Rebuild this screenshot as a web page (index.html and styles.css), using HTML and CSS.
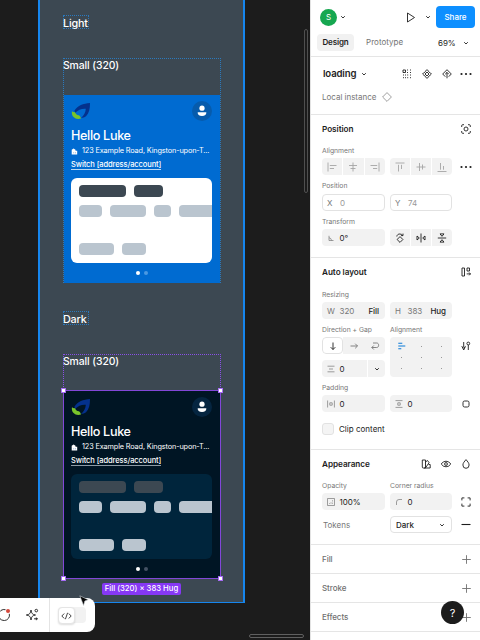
FILE: index.html
```
<!DOCTYPE html>
<html lang="en">
<head>
<meta charset="utf-8">
<title>Design editor</title>
<link rel="stylesheet" href="styles.css">
</head>
<body>
<svg class="defs" aria-hidden="true">
  <symbol id="chev" viewBox="0 0 6 6"><path d="M1.200 2.200 3 4l1.800-1.800"/></symbol>
  <symbol id="logo" viewBox="0 0 20 18"><path d="M3.500 8.500C7 3.200 12 1.500 19 1c0 6-1 10.500-4 13.200-1.500 1.200-3 1.600-5 1.800 3-2.500 4.500-5.500 4.800-9.200C10.500 6.500 7 8 4 11z" fill="#04318c"/><path d="M1 9.300C0 14 4 18.200 10 16.500 9.600 15 9 14 7.800 13.300 5.800 13.200 4.400 12 4 10c-1 .4-2 .1-3-.7z" fill="#79c52b"/></symbol>
  <symbol id="user" viewBox="0 0 10 12"><circle cx="5" cy="3.200" r="2.600" fill="#fff"/><path d="M.7 7.200h8.600c.3 2.300-1.500 3.800-4.300 3.800S.4 9.500.7 7.200z" fill="#fff"/></symbol>
  <symbol id="home" viewBox="0 0 7 7"><path d="M.7 1.800 2.600.4l1.900 1.400v1h1.700v3.700H.7z" fill="#fff"/><path d="M2.700 4.300v1M4.500 4.300v1" stroke="#4a80bb" stroke-width=".6"/></symbol>
  <symbol id="plus" viewBox="0 0 9 9"><path d="M4.500.200v8.600M.2 4.500h8.600"/></symbol>
</svg>
<div class="app">
  <main class="canvas">
    <div class="frame">
      <div class="mode-name light-name">Light</div>
      <section class="variant">
        <h3>Small (320)</h3>
        <article class="card">
          <div class="brand"><svg class="logo"><use href="#logo"/></svg><span class="account"><svg><use href="#user"/></svg></span></div>
          <h2>Hello Luke</h2>
          <p class="address"><svg><use href="#home"/></svg><span>123 Example Road, Kingston-upon-T...</span></p>
          <div class="switch"><span>Switch [address/account]</span></div>
          <div class="skeleton">
            <div class="bars strong"><i class="w47"></i><i class="w29"></i></div>
            <div class="bars"><i class="w23"></i><i class="w35"></i><i class="w18"></i><i class="w47"></i></div>
            <div class="bars last"><i class="w35"></i><i class="w23"></i></div>
          </div>
          <div class="dots"><b></b><b></b></div>
        </article>
      </section>
      <div class="mode-name dark-name">Dark</div>
      <section class="variant selected">
        <h3>Small (320)</h3>
        <article class="card dark">
          <div class="brand"><svg class="logo"><use href="#logo"/></svg><span class="account"><svg><use href="#user"/></svg></span></div>
          <h2>Hello Luke</h2>
          <p class="address"><svg><use href="#home"/></svg><span>123 Example Road, Kingston-upon-T...</span></p>
          <div class="switch"><span>Switch [address/account]</span></div>
          <div class="skeleton">
            <div class="bars strong"><i class="w47"></i><i class="w29"></i></div>
            <div class="bars"><i class="w23"></i><i class="w35"></i><i class="w18"></i><i class="w47"></i></div>
            <div class="bars last"><i class="w35"></i><i class="w23"></i></div>
          </div>
          <div class="dots"><b></b><b></b></div>
          <span class="handle tl"></span><span class="handle tr"></span><span class="handle bl"></span><span class="handle br"></span>
        </article>
      </section>
      <div class="size-badge">Fill (320) × 383 Hug</div>
    </div>
    <div class="scroll-v"></div>
    <div class="scroll-h"></div>
    <div class="toolbar">
      <svg class="tool-comment" viewBox="0 0 14 14"><path d="M7.500 1.700A5.500 5.500 0 1 0 6 12.500h.5A5.300 5.300 0 0 0 11.300 5.800"/><circle cx="10" cy="3" r="2" class="alert"/></svg>
      <svg class="tool-spark" viewBox="0 0 14 14"><path d="M6 2c.4 3.400 1.500 4.600 4.500 5-3 .5-4.100 1.600-4.500 5-.4-3.400-1.500-4.500-4.700-5C4.500 6.600 5.600 5.400 6 2zM9 10.800h4M11.300 9.500v2.700"/><circle cx="11.300" cy="2.600" r="1.300"/></svg>
      <div class="toggle"><span><svg viewBox="0 0 12 10"><path d="M3.500 2.300.9 5l2.600 2.700M8.500 2.300 11.100 5 8.500 7.700M7.200 1.500 4.800 8.500"/></svg></span></div>
    </div>
    <svg class="cursor" viewBox="0 0 10 12"><path d="M.8.8 9.200 4.700 5.800 6.100 4.600 10.500z"/></svg>
  </main>

  <aside class="panel">
    <header>
      <div class="topbar">
        <span class="avatar">S</span><svg class="chev"><use href="#chev"/></svg>
        <svg class="play" viewBox="0 0 10 11"><path d="M1.500 1v9l7-4.500z"/></svg><svg class="chev"><use href="#chev"/></svg>
        <button class="share">Share</button>
      </div>
      <nav class="tabs"><span class="tab active">Design</span><span class="tab proto">Prototype</span><span class="zoom">69%</span><svg class="chev"><use href="#chev"/></svg></nav>
    </header>

    <section class="component">
      <div class="title">
        <strong>loading</strong><svg class="chev"><use href="#chev"/></svg>
        <svg class="icon first" viewBox="0 0 10 10"><path d="M1 1h2.500v2.500H1zM5 1h1M8 1h1M5 3.500h1M8 3.500h1M1 6h1M3 6h1M5.200 6h1M8 6h1M1 8.700h1M3 8.700h1M5.200 8.700h1M8 8.700h1"/></svg>
        <svg class="icon" viewBox="0 0 10 10"><path d="M5 .6 6.700 2.300 5 4 3.300 2.300zM5 6 6.700 7.700 5 9.400 3.300 7.700zM2.300 3.300 4 5 2.300 6.700.6 5zM7.700 3.300 9.400 5 7.700 6.700 6 5z"/></svg>
        <svg class="icon" viewBox="0 0 10 10"><path d="M3.300 7.700.7 5 5 .7 9.300 5 6.700 7.700M5 9.300V3.500M3.200 5.200 5 3.400l1.800 1.800"/></svg>
        <svg class="icon more" viewBox="0 0 12 4"><circle cx="1.500" cy="2" r="1.100"/><circle cx="6" cy="2" r="1.100"/><circle cx="10.500" cy="2" r="1.100"/></svg>
      </div>
      <div class="local"><span>Local instance</span><svg viewBox="0 0 10 10"><path d="M5 .6 9.400 5 5 9.400.6 5z"/></svg></div>
    </section>

    <section class="position">
      <div class="head"><strong>Position</strong><svg class="icon" viewBox="0 0 10 10"><path d="M.7 3V1.700q0-1 1-1H3M7 .7h1.300q1 0 1 1V3M9.300 7v1.300q0 1-1 1H7M3 9.300H1.700q-1 0-1-1V7"/><circle cx="5" cy="5" r="2"/></svg></div>
      <div class="label l15">Alignment</div>
      <div class="row">
        <div class="seg muted">
          <span><svg viewBox="0 0 10 10"><path d="M1 .5v9M2.800 3.500H9.500M2.800 6.500H7"/></svg></span>
          <span><svg viewBox="0 0 10 10"><path d="M5 .5v9M1 3.500h8M2.500 6.500h5"/></svg></span>
          <span><svg viewBox="0 0 10 10"><path d="M9 .5v9M.5 3.500h6.700M3 6.500h4.200"/></svg></span>
        </div>
        <div class="seg muted">
          <span><svg viewBox="0 0 10 10"><path d="M.5 1h9M3.500 2.800v6.700M6.500 2.800V7"/></svg></span>
          <span><svg viewBox="0 0 10 10"><path d="M.5 5h9M3.500 1v8M6.500 2.500v5"/></svg></span>
          <span><svg viewBox="0 0 10 10"><path d="M.5 9.500h9M3.500 1v6.700M6.500 4v3.700"/></svg></span>
        </div>
        <svg class="icon more" viewBox="0 0 12 4"><circle cx="1.500" cy="2" r="1.100"/><circle cx="6" cy="2" r="1.100"/><circle cx="10.500" cy="2" r="1.100"/></svg>
      </div>
      <div class="label l19">Position</div>
      <div class="row">
        <div class="field outline"><span class="key">X</span><span>0</span></div>
        <div class="field outline"><span class="key">Y</span><span>74</span></div>
      </div>
      <div class="label l18">Transform</div>
      <div class="row">
        <div class="field"><svg class="key" viewBox="0 0 8 8"><path d="M2 1.800v4.700h4.500M2 3.700q2.300.4 2.600 2.800"/></svg><span>0°</span></div>
        <div class="seg">
          <span><svg viewBox="0 0 10 10"><path d="M5 3.600 7.900 6.500 5 9.400 2.100 6.500zM1.800 3.500C2 1.800 3.300 1 4.800 1c1.300 0 2.200.5 2.900 1.400M8 .6v2H6"/></svg></span>
          <span><svg viewBox="0 0 10 10"><path d="M5 .5v9M1 3v4l2.300-2zM9 3v4L6.700 5z"/></svg></span>
          <span><svg viewBox="0 0 10 10"><path d="M.8 5h8.400M3 .9h4L5 3.300zM3 9.100h4L5 6.700z"/></svg></span>
        </div>
      </div>
    </section>

    <section class="autolayout">
      <div class="head"><strong>Auto layout</strong><svg class="icon" viewBox="0 0 10 10"><path d="M1 1h2.500v8H1zM6 1h2.500v3H6zM5.700 6.900h3.800M8.200 5.500l1.300 1.400-1.300 1.400"/></svg></div>
      <div class="label l16">Resizing</div>
      <div class="row">
        <div class="field size"><span class="key">W</span><span>320</span><em>Fill</em></div>
        <div class="field size"><span class="key">H</span><span>383</span><em>Hug</em></div>
      </div>
      <div class="row label l18"><span>Direction + Gap</span><span>Alignment</span></div>
      <div class="row tall">
        <div class="stack">
          <div class="seg direction">
            <span class="on"><svg viewBox="0 0 10 10"><path d="M5 1.500v7M2.700 6.200 5 8.500l2.300-2.300"/></svg></span>
            <span><svg viewBox="0 0 10 10"><path d="M1.500 5h7M6.200 2.700 8.500 5 6.200 7.300"/></svg></span>
            <span><svg viewBox="0 0 10 10"><path d="M3 2h3.700C9.300 2 9.300 6.500 6.700 6.500H1.800M3.800 4.500l-2 2 2 2"/></svg></span>
          </div>
          <div class="field gap"><svg class="key" viewBox="0 0 8 8"><path d="M.5 1.200h7M2 4h4M.5 6.800h7"/></svg><span>0</span><i><svg class="chev"><use href="#chev"/></svg></i></div>
        </div>
        <div class="matrix"><svg viewBox="0 0 8 8"><path d="M.3 1.200h4M.3 4h7M.3 6.800h3"/></svg><b></b><b></b><b></b><b></b><b></b><b></b><b></b><b></b></div>
        <svg class="icon adjust" viewBox="0 0 10 10"><path d="M2.700 1v5M7.300 9V4M1 5.500l1.700 1.700 1.700-1.700L2.700 9z"/><circle cx="7.300" cy="2.500" r="1.400"/></svg>
      </div>
      <div class="label l18">Padding</div>
      <div class="row">
        <div class="field"><svg class="key" viewBox="0 0 8 8"><path d="M.6.500v7M7.400.500v7M2.800 2.800h2.400v2.400H2.800z"/></svg><span>0</span></div>
        <div class="field"><svg class="key" viewBox="0 0 8 8"><path d="M.500.600h7M.500 7.400h7M2.800 2.800h2.400v2.400H2.800z"/></svg><span>0</span></div>
        <svg class="icon" viewBox="0 0 10 10"><path d="M3.600 2h2.800M3.600 8h2.800M2 3.600v2.800M8 3.600v2.800M2 3.600Q2 2 3.600 2M6.400 2Q8 2 8 3.600M8 6.400Q8 8 6.400 8M3.600 8Q2 8 2 6.400"/></svg>
      </div>
      <div class="clip"><i></i><span>Clip content</span></div>
    </section>

    <section class="appearance">
      <div class="head"><strong>Appearance</strong>
        <svg class="icon" viewBox="0 0 10 10"><path d="M1.300 1h3.200v8H2.300q-1 0-1-1zM4.500 3l2-1.500 1.600 2.200L4.500 8.800M7.600 5.500h1.600V9H3"/></svg>
        <svg class="icon" viewBox="0 0 10 10"><path d="M.2 5Q2 2.200 5 2.200T9.800 5Q8 7.800 5 7.800T.2 5z"/><circle cx="5" cy="5" r="1.400"/></svg>
        <svg class="icon" viewBox="0 0 10 10"><path d="M5 .6C6.500 2.500 8.100 4 8.100 6a3.100 3.300 0 0 1-6.200 0C1.900 4 3.500 2.500 5 .6z"/></svg></div>
      <div class="row label l15"><span>Opacity</span><span>Corner radius</span></div>
      <div class="row">
        <div class="field"><svg class="key" viewBox="0 0 8 8"><path d="M.500.500h7v7h-7z"/><path d="M5.500 2v.7M5.500 3.600v.7M5.500 5.200v.7M4 4v.6M4 5.300v.6M2.500 5.200v.7"/></svg><span>100%</span></div>
        <div class="field"><svg class="key" viewBox="0 0 8 8"><path d="M1.500 7V4Q1.500 1.500 4 1.500h3"/></svg><span>0</span></div>
        <svg class="icon" viewBox="0 0 10 10"><path d="M.9 3.400V.9h2.500M6.600.9h2.500v2.500M9.100 6.600v2.500H6.600M3.400 9.100H.9V6.600"/></svg>
      </div>
      <div class="row tokens">
        <span>Tokens</span>
        <div class="field outline select"><span>Dark</span><svg class="chev"><use href="#chev"/></svg></div>
        <svg class="icon minus" viewBox="0 0 10 10"><path d="M.5 4.500h9"/></svg>
      </div>
    </section>

    <section class="line"><span>Fill</span><svg><use href="#plus"/></svg></section>
    <section class="line"><span>Stroke</span><svg><use href="#plus"/></svg></section>
    <section class="line"><span>Effects</span><svg><use href="#plus"/></svg></section>
    <button class="help">?</button>
  </aside>
</div>
</body>
</html>
```
FILE: styles.css
```
* { box-sizing: border-box; }
body, h2, h3, p { margin: 0; }
body { width: 480px; height: 640px; overflow: hidden; font-family: Inter, "Liberation Sans", sans-serif; }
svg { display: block; flex: none; fill: none; stroke: currentColor; stroke-width: .9; }
.defs { position: absolute; width: 0; height: 0; }
button { border: 0; padding: 0; font-family: inherit; }
.app { display: flex; width: 480px; height: 640px; }

/* Canvas */
.canvas { position: relative; width: 310px; height: 640px; overflow: hidden; background: #1c1c1c; }
.frame { width: 207px; height: 603px; margin-left: 38px; padding: 15px 0 0 23px; border: solid #1686ee; border-width: 0 2px 1px; background: #3c4852; color: #fff; }
.mode-name { width: 26px; height: 14px; border: 1px dotted #2b79bd; font-size: 10.800px; line-height: 15px; font-weight: 500; letter-spacing: -.2px; white-space: nowrap; text-indent: -1px; }
.mode-name.dark-name { margin-top: 28px; }
.variant { width: 158px; height: 225px; margin-top: 29px; border: 1px dotted #2b79bd; }
.variant h3 { height: 36px; font-size: 10.400px; line-height: 14px; font-weight: 500; letter-spacing: -.1px; text-indent: -1px; }
.variant.selected { margin-top: 29px; border-color: #8a50e6; }
.card { position: relative; width: 156px; height: 188px; padding: 6px 8px 0 7px; background: #006bd1; }
.brand { display: flex; justify-content: space-between; align-items: center; height: 20px; }
.logo { width: 20px; height: 18px; stroke: none; }
.account { display: grid; place-items: center; width: 20px; height: 20px; border-radius: 50%; background: #065bac; }
.account svg { width: 10px; height: 12px; stroke: none; }
.card h2 { height: 16px; margin-top: 7px; font-size: 12.600px; line-height: 16px; font-weight: 500; letter-spacing: -.33px; }
.address { display: flex; align-items: center; height: 12px; margin-top: 1px; font-size: 7.300px; line-height: 12px; letter-spacing: -.13px; white-space: nowrap; }
.address svg { width: 7px; height: 7px; margin-right: 4px; stroke: none; }
.switch { display: flex; margin-top: 2px; }
.switch span { height: 11px; border-bottom: 1px solid #b9d8f4; font-size: 7.500px; line-height: 11px; font-weight: 500; letter-spacing: -.09px; white-space: nowrap; }
.skeleton { height: 85px; margin-top: 8px; padding: 7px 0 0 8px; border-radius: 6px; overflow: hidden; background: #fff; }
.bars { display: flex; gap: 8px; height: 12px; margin-bottom: 8px; }
.bars i { flex: none; height: 12px; border-radius: 4px; background: #bac5cf; }
.bars.strong i { background: #3c4852; }
.bars.last { margin-top: 26px; }
.w47 { width: 47px; } .w35 { width: 35.300px; } .w29 { width: 29px; } .w23 { width: 23.400px; } .w18 { width: 17.800px; }
.dots { display: flex; justify-content: center; gap: 4px; margin-top: 8px; }
.dots b { width: 4px; height: 4px; border-radius: 50%; background: #fff; }
.dots b + b { background: #4b99e2; }
.card.dark { height: 187px; background: #001524; outline: 1px solid #8247d8; }
.dark .account { background: #052540; }
.dark .skeleton { background: #00253c; }
.dark .dots b + b { background: #445264; }
.dark .switch span { border-color: #8d9aa5; }
.handle { position: absolute; width: 5px; height: 5px; border: 1px solid #a66cf3; background: #fff; }
.tl { left: -3px; top: -3px; } .tr { right: -3px; top: -3px; } .bl { left: -3px; bottom: -3px; } .br { right: -3px; bottom: -3px; }
.size-badge { width: 79px; height: 12px; margin: 4px 0 0 39px; border-radius: 2px; background: #8638f5; font-size: 7.700px; line-height: 12px; font-weight: 500; text-align: center; white-space: nowrap; }
.scroll-v { position: absolute; left: 304px; top: 29px; width: 4px; height: 164px; border: 1px solid #505050; border-radius: 2px; }
.scroll-h { position: absolute; left: 249px; top: 634px; width: 55px; height: 4px; border: 1px solid #606060; border-radius: 2px; }
.toolbar { position: absolute; left: 0; top: 598px; display: flex; align-items: center; width: 95px; height: 34px; border-radius: 0 8px 8px 0; background: #fff; color: #1c1c1c; }
.tool-comment { width: 14px; height: 14px; margin-left: -2px; }
.alert { fill: #d4493c; stroke: none; }
.tool-spark { width: 14px; height: 14px; margin-left: 13px; }
.toggle { position: relative; width: 28px; height: 16px; margin-left: 19px; border-radius: 4px; background: #f2f2f2; }
.toggle::before { content: ""; position: absolute; left: -9px; top: -9px; width: 1px; height: 34px; background: #e4e4e4; }
.toggle span { display: grid; place-items: center; width: 17px; height: 17px; border: 1px solid #e5e5e5; border-radius: 4px; background: #fff; box-shadow: 0 1px 2px #0002; }
.toggle svg { width: 11px; height: 10px; }
.cursor { position: absolute; left: 79px; top: 595px; width: 10px; height: 12px; fill: #080808; stroke: #c9ced2; stroke-width: .6; }

/* Inspector */
.panel { position: relative; width: 170px; height: 640px; border-left: 1px solid #e3e3e3; background: #fff; color: #1d1d1d; font-size: 8px; line-height: 12px; letter-spacing: -.05px; }
.panel header, .panel section { border-bottom: 1px solid #e5e5e5; padding-left: 11px; }
.panel header { height: 57px; padding-left: 6px; }
.chev { width: 6px; height: 6px; stroke-width: .9; }
.topbar { display: flex; align-items: center; height: 34px; padding-left: 3px; }
.avatar { width: 17px; height: 17px; margin-right: 3px; border-radius: 50%; background: #16a750; color: #fff; line-height: 17px; text-align: center; }
.play { width: 10px; height: 11px; margin: 0 9px 0 60px; }
.share { width: 39px; height: 22px; margin-left: 5px; border-radius: 4px; background: #0d8fff; color: #fff; font-size: 8px; font-weight: 500; }
.tabs { display: flex; align-items: center; height: 17px; }
.tab { height: 17px; line-height: 17px; }
.tab.active { width: 37px; border-radius: 4px; background: #f1f1f1; text-align: center; font-weight: 600; letter-spacing: -.12px; }
.proto { width: 84px; padding-left: 12px; color: #737373; letter-spacing: .03px; }
.zoom { width: 25px; }
.component { height: 58px; }
.title { display: flex; align-items: center; height: 34px; }
.title strong { width: 39px; padding-left: 1px; font-size: 9.600px; letter-spacing: -.15px; }
strong { font-weight: 600; }
.icon { width: 10px; height: 10px; justify-self: center; }
.title .icon { margin-right: 10px; }
.title .first { margin-left: 35px; }
.panel .more { width: 12px; height: 4px; margin: 0; fill: currentColor; stroke: none; }
.title .more { margin-left: -2px; }
.local { display: flex; align-items: center; height: 12px; gap: 6px; color: #777; letter-spacing: -.02px; }
.local svg { width: 10px; height: 10px; stroke-width: .7; }
.position { height: 143px; }
.autolayout { height: 192px; }
.appearance { height: 95px; }
.head { display: flex; align-items: center; height: 28px; padding-right: 9px; gap: 10px; }
.head strong { flex: 1; font-size: 8.200px; }
.label { color: #777; font-size: 6.800px; letter-spacing: -.02px; }
.l15 { height: 15px; line-height: 15px; } .l16 { height: 16px; line-height: 17px; }
.l18 { height: 18px; padding-top: 1px; line-height: 19px; } .l19 { height: 19px; padding-top: 2px; line-height: 18px; }
.row { display: grid; grid-template-columns: 63px 62px 18px; column-gap: 5px; align-items: center; }
.row.label { align-items: start; white-space: nowrap; }
.seg { display: grid; grid-template-columns: repeat(3, 1fr); gap: 1px; height: 17px; border-radius: 4px; overflow: hidden; }
.seg span { display: grid; place-items: center; background: #f2f2f2; }
.seg svg { width: 10px; height: 10px; }
.muted { color: #a5a5a5; }
.field { display: flex; align-items: center; height: 17px; padding-left: 5px; border-radius: 4px; background: #f2f2f2; font-size: 8px; }
.field .key { width: 8px; height: 8px; margin-right: 4.500px; color: #777; line-height: 8px; stroke-width: .7; }
.outline { padding-left: 4px; border: 1px solid #e2e2e2; background: #fff; color: #999; }
.outline .key { margin-right: 5px; }
.size { color: #777; }
.size em { margin: 0 6px 0 auto; color: #1d1d1d; font-style: normal; font-weight: 500; }
.stack { display: grid; gap: 6px; }
.direction { gap: 0; color: #777; }
.direction .on { border: 1px solid #e2e2e2; border-radius: 4px; background: #fff; color: #1d1d1d; }
.gap i { display: grid; place-items: center; width: 18px; height: 17px; margin-left: auto; border-left: 1px solid #fff; }
.matrix { display: grid; grid-template-columns: repeat(3, 20px); grid-template-rows: repeat(3, 11px); place-content: center; place-items: center; height: 40px; padding-left: 1px; border-radius: 4px; background: #f2f2f2; }
.matrix svg { width: 8px; height: 8px; color: #0b7ad8; stroke-width: 1.1; }
.matrix b { width: 1px; height: 1px; background: #999; }
.adjust { align-self: start; margin-top: 4px; }
.clip { display: flex; align-items: center; height: 34px; gap: 5px; letter-spacing: .02px; }
.clip i { width: 12px; height: 12px; border: 1px solid #e2e2e2; border-radius: 3px; background: #f4f4f4; }
.tokens { margin-top: 6px; color: #777; letter-spacing: 0; }
.tokens > span { padding-left: 1px; }
.minus { stroke-width: 1.1; color: #1d1d1d; }
.select { padding: 0 6px 0 5px; justify-content: space-between; color: #1d1d1d; font-weight: 500; letter-spacing: 0; }
.line { display: flex; align-items: center; justify-content: space-between; height: 29px; padding-right: 9px; color: #707070; font-weight: 500; }
.line svg { width: 9px; height: 9px; stroke-width: .9; }
.help { position: absolute; left: 130px; top: 601px; width: 23px; height: 23px; border-radius: 50%; background: #1c1c1c; color: #fff; font-size: 11px; }
```
